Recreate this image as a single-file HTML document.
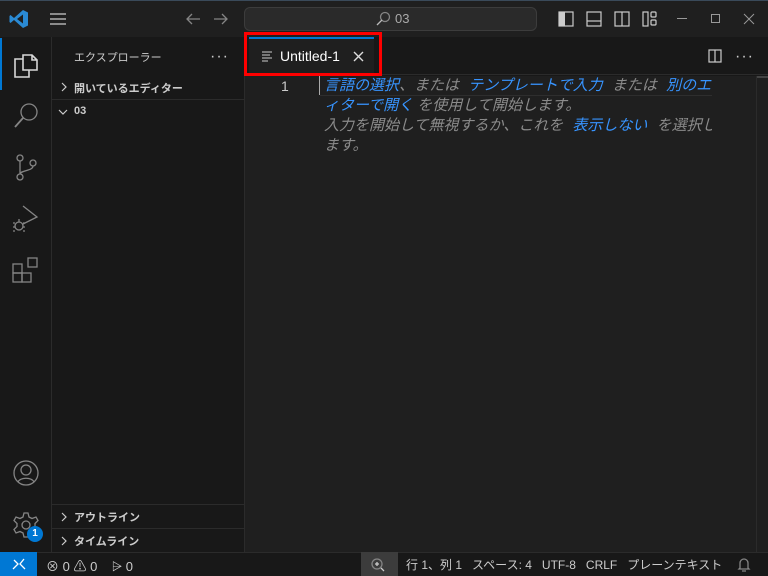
<!DOCTYPE html>
<html><head><meta charset="utf-8"><style>
*{margin:0;padding:0;box-sizing:border-box}
body{width:768px;height:576px;overflow:hidden;background:#181818;font-family:"Liberation Sans","Noto Sans CJK JP",sans-serif;color:#ccc;position:relative}
.a{position:absolute}
svg{position:absolute;overflow:visible}
.ico{fill:none;stroke:#858585;stroke-width:1.3}
.tb{stroke:#ccc;fill:none;stroke-width:1.2}
.jp{font-family:"Liberation Sans","Noto Sans CJK JP",sans-serif}
.ed{font-style:italic;font-size:15px;color:#8b8b8b;white-space:nowrap;line-height:20px}
.ed b{font-weight:normal;color:#3794ff;margin:0 5px}
.ed b.f{margin:0}
.ed b.g{margin-right:0}
.dots{font-size:16px;letter-spacing:1px;color:#ccc;line-height:10px}
</style></head><body>
<div class="a" style="left:0;top:0;width:768px;height:37px;background:#1f1f1f;border-top:1px solid #3a4a5a"></div>
<svg style="left:9px;top:9px" width="20" height="20" viewBox="0 0 20 20"><path d="M14 1 L19 3.5 V16.5 L14 19 L5 11 L1.5 14 L0.5 13 V7 L1.5 6 L5 9 Z M14 5.5 L8 10 L14 14.5 Z" fill="#2a8ad4" fill-rule="evenodd"/></svg>
<svg style="left:49px;top:12px" width="18" height="14"><path d="M1 2H17M1 7H17M1 12H17" stroke="#ccc" stroke-width="1.3"/></svg>
<svg style="left:185px;top:11px" width="16" height="16"><path d="M15 8H2M7 3L2 8L7 13" class="ico" stroke="#999"/></svg>
<svg style="left:213px;top:11px" width="16" height="16"><path d="M1 8H14M9 3L14 8L9 13" class="ico" stroke="#999"/></svg>
<div class="a" style="left:244px;top:7px;width:293px;height:24px;background:#2a2a2a;border:1px solid #3c3c3c;border-radius:6px"></div>
<svg style="left:375px;top:11px" width="16" height="16"><circle cx="10" cy="6" r="4.5" class="ico" stroke="#bbb"/><path d="M7 9L2 14" stroke="#bbb" stroke-width="1.3"/></svg>
<div class="a" style="left:395px;top:11px;font-size:13px;color:#aaa">03</div>
<svg style="left:558px;top:11px" width="16" height="16"><rect x="1" y="1" width="14" height="14" class="tb"/><rect x="1" y="1" width="6" height="14" fill="#ccc"/></svg>
<svg style="left:586px;top:11px" width="16" height="16"><rect x="1" y="1" width="14" height="14" class="tb"/><path d="M1 10H15" class="tb"/></svg>
<svg style="left:614px;top:11px" width="16" height="16"><rect x="1" y="1" width="14" height="14" class="tb"/><path d="M8 1V15" class="tb"/></svg>
<svg style="left:642px;top:11px" width="16" height="16"><rect x="1" y="1" width="5" height="14" class="tb"/><rect x="9" y="1" width="5" height="5" rx="1" class="tb"/><rect x="9" y="9" width="5" height="5" rx="1" class="tb"/></svg>
<div class="a" style="left:677px;top:18px;width:10px;height:1px;background:#999"></div>
<div class="a" style="left:711px;top:14px;width:9px;height:9px;border:1px solid #999"></div>
<svg style="left:743px;top:13px" width="12" height="12"><path d="M1 1L11 11M11 1L1 11" stroke="#999" stroke-width="1"/></svg>
<div class="a" style="left:0;top:37px;width:52px;height:515px;background:#181818;border-right:1px solid #2b2b2b"></div>
<div class="a" style="left:0;top:38px;width:2px;height:52px;background:#0078d4"></div>
<svg style="left:13px;top:50px" width="26" height="28"><path d="M10 5H19L24 10V20H10Z M19 5V10H24 M10 9H2V27H16V20" fill="none" stroke="#d7d7d7" stroke-width="1.6"/></svg>
<svg style="left:13px;top:101px" width="26" height="28"><circle cx="16" cy="11" r="8" class="ico" stroke="#858585" stroke-width="1.6"/><path d="M10 17L2 26" stroke="#858585" stroke-width="1.8"/></svg>
<svg style="left:14px;top:153px" width="26" height="28"><circle cx="6" cy="5" r="3" class="ico" stroke-width="1.6"/><circle cx="6" cy="24" r="3" class="ico" stroke-width="1.6"/><circle cx="19" cy="10" r="3" class="ico" stroke-width="1.6"/><path d="M6 8V21M19 13C19 18 7 17 6 21" class="ico" stroke-width="1.6"/></svg>
<svg style="left:11px;top:204px" width="28" height="28"><path d="M12 2L26 13L12 20" class="ico" stroke-width="1.6"/><circle cx="8" cy="22" r="4" class="ico" stroke-width="1.6"/><path d="M2 19H4M2 23H4M2 27H4M12 19H14M12 23H14M12 27H14M8 15V18" class="ico" stroke-width="1.4"/></svg>
<svg style="left:12px;top:256px" width="28" height="28"><rect x="1" y="8" width="9" height="9" class="ico" stroke-width="1.6"/><rect x="1" y="17" width="9" height="9" class="ico" stroke-width="1.6"/><rect x="10" y="17" width="9" height="9" class="ico" stroke-width="1.6"/><rect x="16" y="2" width="9" height="9" class="ico" stroke-width="1.6"/></svg>
<svg style="left:12px;top:459px" width="28" height="28"><circle cx="14" cy="14" r="12" class="ico" stroke-width="1.6"/><circle cx="14" cy="11" r="5" class="ico" stroke-width="1.6"/><path d="M6 23C8 18 20 18 22 23" class="ico" stroke-width="1.6"/></svg>
<svg style="left:12px;top:511px" width="28" height="28"><circle cx="14" cy="14" r="4" class="ico" stroke-width="1.6"/><path d="M12 2H16L17 6L20 7.5L24 6L26 9.5L23 12.5V15.5L26 18.5L24 22L20 20.5L17 22L16 26H12L11 22L8 20.5L4 22L2 18.5L5 15.5V12.5L2 9.5L4 6L8 7.5L11 6Z" class="ico" stroke-width="1.5"/></svg>
<div class="a" style="left:27px;top:526px;width:16px;height:16px;border-radius:8px;background:#0078d4;color:#fff;font-size:10px;font-weight:bold;text-align:center;line-height:16px">1</div>
<div class="a" style="left:52px;top:37px;width:193px;height:515px;background:#181818;border-right:1px solid #2b2b2b"></div>
<div class="a jp" style="left:74px;top:49px;font-size:11px;color:#ccc">エクスプローラー</div>
<div class="a dots" style="left:210px;top:52px">···</div>
<svg style="left:60px;top:82px" width="8" height="10"><path d="M2 1L6 5L2 9" stroke="#ccc" stroke-width="1.2" fill="none"/></svg>
<div class="a jp" style="left:74px;top:80px;font-size:11px;font-weight:bold;color:#ccc">開いているエディター</div>
<div class="a" style="left:52px;top:99px;width:192px;height:1px;background:#2b2b2b"></div>
<svg style="left:58px;top:108px" width="10" height="8"><path d="M1 2L5 6L9 2" stroke="#ccc" stroke-width="1.2" fill="none"/></svg>
<div class="a" style="left:74px;top:105px;font-size:11px;font-weight:bold;color:#ccc">03</div>
<div class="a" style="left:52px;top:504px;width:192px;height:1px;background:#2b2b2b"></div>
<svg style="left:60px;top:512px" width="8" height="10"><path d="M2 1L6 5L2 9" stroke="#ccc" stroke-width="1.2" fill="none"/></svg>
<div class="a jp" style="left:74px;top:509px;font-size:11px;font-weight:bold;color:#ccc">アウトライン</div>
<div class="a" style="left:52px;top:528px;width:192px;height:1px;background:#2b2b2b"></div>
<svg style="left:60px;top:536px" width="8" height="10"><path d="M2 1L6 5L2 9" stroke="#ccc" stroke-width="1.2" fill="none"/></svg>
<div class="a jp" style="left:74px;top:533px;font-size:11px;font-weight:bold;color:#ccc">タイムライン</div>
<div class="a" style="left:245px;top:37px;width:523px;height:38px;background:#181818;border-bottom:1px solid #2b2b2b"></div>
<div class="a" style="left:249px;top:37px;width:125px;height:38px;background:#1f1f1f;border-top:2px solid #0078d4"></div>
<svg style="left:262px;top:51px" width="12" height="10"><path d="M0 1H10M0 4H8M0 7H10M0 10H6" stroke="#ccc" stroke-width="1"/></svg>
<div class="a" style="left:280px;top:48px;font-size:14px;color:#fff">Untitled-1</div>
<svg style="left:353px;top:51px" width="11" height="11"><path d="M1 1L10 10M10 1L1 10" stroke="#ddd" stroke-width="1.4"/></svg>
<div class="a" style="left:244px;top:32px;width:138px;height:44px;border:3px solid #f00"></div>
<svg style="left:708px;top:49px" width="14" height="14"><rect x="1" y="1" width="12" height="12" class="tb"/><path d="M7 1V13" class="tb"/></svg>
<div class="a dots" style="left:735px;top:52px">···</div>
<div class="a" style="left:245px;top:76px;width:523px;height:476px;background:#1f1f1f"></div>
<div class="a" style="left:756px;top:76px;width:1px;height:476px;background:#2b2b2b"></div>
<div class="a" style="left:757px;top:76px;width:11px;height:2px;background:#444"></div>
<div class="a" style="left:281px;top:78px;font-size:14px;color:#ccc">1</div>
<div class="a" style="left:319px;top:76px;width:1px;height:19px;background:#aaa"></div>
<div class="a" style="left:320px;top:95px;width:392px;height:1px;background:#2e2e2e"></div>
<div class="a" style="left:324px;top:76px;width:388px;height:82px;overflow:hidden">
<div class="ed"><b class="f">言語の選択</b>、または <b>テンプレートで入力</b> または <b class="g">別のエ</b></div>
<div class="ed"><b class="f">ィターで開く</b> を使用して開始します。</div>
<div class="ed">入力を開始して無視するか、これを <b>表示しない</b> を選択します</div>
<div class="ed">ます。</div>
</div>
<div class="a" style="left:0;top:552px;width:768px;height:24px;background:#181818;border-top:1px solid #2b2b2b"></div>
<div class="a" style="left:0;top:552px;width:37px;height:24px;background:#0078d4"></div>
<svg style="left:11px;top:557px" width="16" height="14"><path d="M2 12L7 7L3 3M13 2L9 7L14 12" stroke="#fff" stroke-width="1.3" fill="none"/></svg>
<div class="a" style="left:46px;top:556px;font-size:13px;color:#ccc">⊗ 0 ⚠ 0 &nbsp;&nbsp;&nbsp;⩥ 0</div>
<div class="a" style="left:361px;top:552px;width:37px;height:24px;background:#3c3c3c"></div>
<svg style="left:370px;top:557px" width="16" height="16"><circle cx="7" cy="7" r="5" class="ico" stroke="#ccc"/><path d="M11 11L14 14M5 7H9M7 5V9" stroke="#ccc" stroke-width="1.3"/></svg>
<div class="a jp" style="left:406px;top:556px;font-size:12px;color:#ccc;white-space:nowrap">行 1、列 1 &nbsp;&nbsp;スペース: 4 &nbsp;&nbsp;UTF-8 &nbsp;&nbsp;CRLF &nbsp;&nbsp;プレーンテキスト</div>
<svg style="left:737px;top:557px" width="14" height="16"><path d="M3 11V6A4 4 0 0 1 11 6V11L12 12H2Z M5 14H9" class="ico" stroke="#ccc"/></svg>
</body></html>
